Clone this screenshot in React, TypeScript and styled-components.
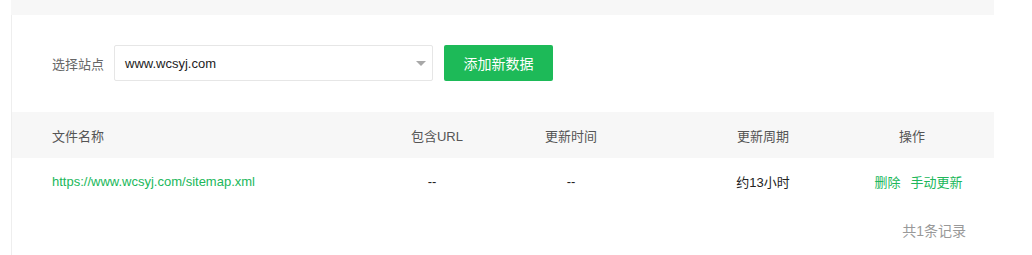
import React from "react";
import styled, { createGlobalStyle } from "styled-components";

const Global = createGlobalStyle`
  html, body { margin: 0; padding: 0; background: #fff; }
  body { font-family: "Liberation Sans", Arial, "Noto Sans CJK SC", sans-serif; font-size: 13px; color: #333; }
`;

const Page = styled.div`
  width: 983px;
  margin-left: 11px;
  background: #f7f7f7;
  padding-top: 15px;
`;

const Panel = styled.div`
  background: #fff;
  border-left: 1px solid #eeeeee;
  height: 240px;
  box-sizing: border-box;
`;

const Toolbar = styled.div`
  display: flex;
  align-items: center;
  height: 36px;
  padding: 30px 0 0 40px;
`;

const Label = styled.span`
  color: #666;
  font-size: 13px;
  margin-right: 10px;
`;

const Select = styled.div`
  width: 319px;
  height: 36px;
  box-sizing: border-box;
  border: 1px solid #e6e6e6;
  border-radius: 2px;
  display: flex;
  align-items: center;
  justify-content: space-between;
  padding: 0 6px 0 10px;
  color: #222;
  font-size: 13px;
`;

const Caret = styled.span`
  width: 0;
  height: 0;
  border-left: 5px solid transparent;
  border-right: 5px solid transparent;
  border-top: 5px solid #a8a8a8;
`;

const Button = styled.button`
  margin-left: 11px;
  width: 109px;
  height: 36px;
  border: none;
  border-radius: 2px;
  background: #1dba58;
  color: #fff;
  font-family: "Liberation Sans", "Noto Sans CJK SC", sans-serif;
  font-size: 14px;
  padding: 0;
`;

const Row = styled.div<{ $head?: boolean }>`
  display: grid;
  grid-template-columns: 355px 140px 128px 230px 129px;
  align-items: center;
  height: ${(p) => (p.$head ? "46px" : "47px")};
  background: ${(p) => (p.$head ? "#f7f7f7" : "#fff")};
  color: ${(p) => (p.$head ? "#555" : "#222")};
  font-size: 13px;
  margin-top: ${(p) => (p.$head ? "31px" : "0")};
`;

const Cell = styled.div<{ $align?: "left" | "center"; $pl?: number; $pr?: number }>`
  text-align: ${(p) => p.$align ?? "center"};
  padding-left: ${(p) => p.$pl ?? 0}px;
  padding-right: ${(p) => p.$pr ?? 0}px;
  white-space: nowrap;
`;

const Link = styled.a`
  color: #20b75a;
  text-decoration: none;
`;

const Action = styled.a`
  color: #20b75a;
  text-decoration: none;
  & + & { margin-left: 10px; }
`;

const Footer = styled.div`
  display: flex;
  justify-content: flex-end;
  padding: 15px 28px 0 0;
  color: #999;
  font-size: 14px;
`;

export default function App() {
  return (
    <>
      <Global />
      <Page>
        <Panel>
          <Toolbar>
            <Label>选择站点</Label>
            <Select>
              <span>www.wcsyj.com</span>
              <Caret />
            </Select>
            <Button>添加新数据</Button>
          </Toolbar>
          <Row $head>
            <Cell $align="left" $pl={40}>文件名称</Cell>
            <Cell>包含URL</Cell>
            <Cell>更新时间</Cell>
            <Cell $pl={26}>更新周期</Cell>
            <Cell $pr={35}>操作</Cell>
          </Row>
          <Row>
            <Cell $align="left" $pl={40}>
              <Link>https://www.wcsyj.com/sitemap.xml</Link>
            </Cell>
            <Cell $pr={10}>--</Cell>
            <Cell>--</Cell>
            <Cell $pl={26}>约13小时</Cell>
            <Cell $pr={22}>
              <Action>删除</Action>
              <Action>手动更新</Action>
            </Cell>
          </Row>
          <Footer>共1条记录</Footer>
        </Panel>
      </Page>
    </>
  );
}
